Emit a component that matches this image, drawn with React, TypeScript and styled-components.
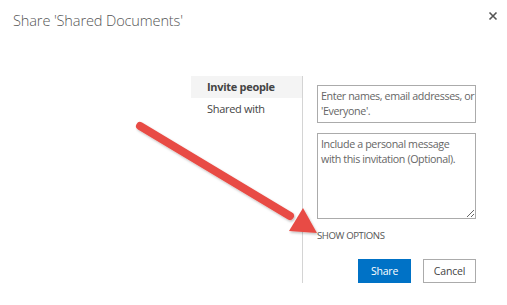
import React from "react";
import styled, { createGlobalStyle } from "styled-components";

const Global = createGlobalStyle`
  html, body { margin: 0; padding: 0; background: #ffffff; }
  body { font-family: "Open Sans", "Noto Sans", sans-serif; width: 507px; height: 305px; overflow: hidden; }
`;

const Page = styled.div`
  position: relative;
  width: 507px;
  height: 305px;
  display: flex;
  flex-direction: column;
`;

const Header = styled.div`
  display: flex;
  justify-content: space-between;
  align-items: flex-start;
  height: 76px;
  padding: 10px 9px 0 13px;
  box-sizing: border-box;
`;

const Title = styled.h1`
  margin: 0;
  font-family: "Open Sans", sans-serif;
  font-weight: 300;
  font-size: 14.6px;
  line-height: 20px;
  color: #555555;
  letter-spacing: -0.15px;
`;

const Close = styled.button`
  border: none;
  background: transparent;
  padding: 0;
  margin-top: 1px;
  width: 10px;
  height: 10px;
  display: flex;
  cursor: pointer;
`;

const Body = styled.div`
  display: flex;
  padding-left: 191px;
`;

const Nav = styled.nav`
  width: 111px;
  height: 207px;
  border-right: 1px solid #d4d4d4;
  display: flex;
  flex-direction: column;
`;

const NavItem = styled.div<{ $active?: boolean }>`
  height: 22px;
  line-height: 22px;
  padding-left: 16px;
  font-size: 11px;
  font-family: "Open Sans", sans-serif;
  color: #444444;
  font-weight: ${(p) => (p.$active ? 700 : 400)};
  background: ${(p) => (p.$active ? "#f4f4f4" : "transparent")};
  letter-spacing: -0.3px;
`;

const Form = styled.div`
  padding-left: 14px;
  padding-top: 9px;
  width: 159px;
  display: flex;
  flex-direction: column;
`;

const Field = styled.textarea<{ $h: number; $grip?: boolean }>`
  display: block;
  box-sizing: border-box;
  width: 159px;
  height: ${(p) => p.$h}px;
  border: 1px solid #ababab;
  padding: 3px 0 3px 3px;
  margin: 0 0 10px 0;
  font-family: "Open Sans", sans-serif;
  font-size: 10.7px;
  line-height: 15px;
  letter-spacing: -0.38px;
  color: #444;
  resize: ${(p) => (p.$grip ? "both" : "none")};
  overflow: hidden;
  outline: none;
  &::placeholder { color: #666666; opacity: 1; }
`;

const Options = styled.div`
  font-size: 9.6px;
  line-height: 14px;
  color: #555555;
  text-transform: uppercase;
  letter-spacing: -0.4px;
`;

const Buttons = styled.div`
  display: flex;
  justify-content: flex-end;
  gap: 12px;
  margin-top: 16px;
`;

const Btn = styled.button<{ $primary?: boolean }>`
  box-sizing: border-box;
  width: 53px;
  height: 24px;
  padding: 0;
  font-family: "Open Sans", sans-serif;
  font-size: 10.5px;
  letter-spacing: -0.2px;
  border: 1px solid ${(p) => (p.$primary ? "#0072c6" : "#ababab")};
  background: ${(p) => (p.$primary ? "#0072c6" : "#ffffff")};
  color: ${(p) => (p.$primary ? "#ffffff" : "#444444")};
`;

const Arrow = styled.svg`
  position: absolute;
  left: 0;
  top: 0;
  pointer-events: none;
`;

export default function App() {
  return (
    <Page>
      <Global />
      <Header>
        <Title>Share 'Shared Documents'</Title>
        <Close aria-label="Close">
          <svg width="10" height="10" viewBox="0 0 10 10">
            <path d="M1.5 1.5 L8.5 8.5 M8.5 1.5 L1.5 8.5" stroke="#555" strokeWidth="1.6" />
          </svg>
        </Close>
      </Header>
      <Body>
        <Nav>
          <NavItem $active>Invite people</NavItem>
          <NavItem>Shared with</NavItem>
        </Nav>
        <Form>
          <Field $h={38} placeholder={"Enter names, email addresses, or\n'Everyone'."} />
          <Field $h={86} $grip placeholder={"Include a personal message\nwith this invitation (Optional)."} />
          <Options>Show options</Options>
          <Buttons>
            <Btn $primary>Share</Btn>
            <Btn>Cancel</Btn>
          </Buttons>
        </Form>
      </Body>
      <Arrow width="507" height="305" viewBox="0 0 507 305">
        <defs>
          <filter id="sh" x="-10%" y="-10%" width="130%" height="130%">
            <feDropShadow dx="1" dy="1.5" stdDeviation="1" floodColor="#000" floodOpacity="0.25" />
          </filter>
        </defs>
        <g filter="url(#sh)">
          <line x1="140" y1="126" x2="290" y2="216" stroke="#e84c45" strokeWidth="8" strokeLinecap="round" />
          <polygon points="317,233 303,208 289,231" fill="#e84c45" />
        </g>
      </Arrow>
    </Page>
  );
}
